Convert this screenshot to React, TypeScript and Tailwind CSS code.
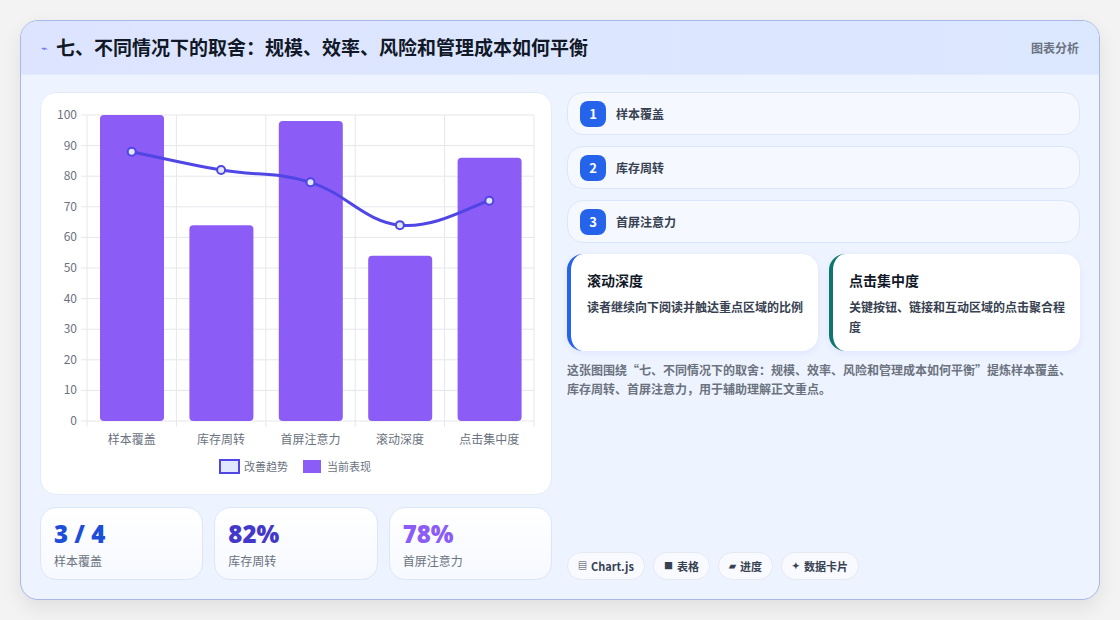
import React from "react";

const F = { fontFamily: '"Noto Sans CJK SC", "Noto Sans", sans-serif' };

function Chart() {
  const x0 = 46, x1 = 493, yT = 22, yB = 328;
  const cw = (x1 - x0) / 5;
  const y = (v: number) => yB - (v / 100) * (yB - yT);
  const bars = [100, 64, 98, 54, 86];
  const line = [88, 82, 78, 64, 72];
  const labels = ["样本覆盖", "库存周转", "首屏注意力", "滚动深度", "点击集中度"];
  const pts = line.map((v, i) => [x0 + cw * (i + 0.5), y(v)]);
  let d = `M${pts[0][0]},${pts[0][1]}`;
  for (let i = 0; i < pts.length - 1; i++) {
    const p0 = pts[i - 1] || pts[i], p1 = pts[i], p2 = pts[i + 1], p3 = pts[i + 2] || p2;
    const t = 0.2;
    const c1 = [p1[0] + (p2[0] - p0[0]) * t, p1[1] + (p2[1] - p0[1]) * t];
    const c2 = [p2[0] - (p3[0] - p1[0]) * t, p2[1] - (p3[1] - p1[1]) * t];
    d += ` C${c1[0]},${c1[1]} ${c2[0]},${c2[1]} ${p2[0]},${p2[1]}`;
  }
  return (
    <svg width="512" height="403" style={F}>
      {Array.from({ length: 11 }).map((_, i) => (
        <g key={i}>
          <line x1={x0 - 6} x2={x1} y1={y(i * 10)} y2={y(i * 10)} stroke="#e5e7eb" />
          <text x={36} y={y(i * 10) + 4} textAnchor="end" fontSize="12" fill="#6b7280">{i * 10}</text>
        </g>
      ))}
      {Array.from({ length: 6 }).map((_, i) => (
        <line key={i} x1={x0 + cw * i} x2={x0 + cw * i} y1={yT} y2={yB + 6} stroke="#e5e7eb" />
      ))}
      {bars.map((v, i) => (
        <rect key={i} x={x0 + cw * i + 13} y={y(v)} width={64} height={yB - y(v)} rx={4} fill="#8b5cf6" />
      ))}
      <path d={d} fill="none" stroke="#4f46e5" strokeWidth="3" />
      {pts.map((p, i) => (
        <circle key={i} cx={p[0]} cy={p[1]} r={4} fill="#e0e7ff" stroke="#4f46e5" strokeWidth="2" />
      ))}
      {labels.map((l, i) => (
        <text key={i} x={x0 + cw * (i + 0.5)} y={351} textAnchor="middle" fontSize="12" fill="#6b7280">{l}</text>
      ))}
      <rect x={179} y={367} width={19} height={13} fill="#e0e7ff" stroke="#4f46e5" strokeWidth="2" />
      <text x={203} y={378} fontSize="11" fill="#6b7280">改善趋势</text>
      <rect x={262} y={367} width={18} height={13} fill="#8b5cf6" />
      <text x={286} y={378} fontSize="11" fill="#6b7280">当前表现</text>
    </svg>
  );
}

function Stat({ v, l, c }: { v: string; l: string; c: string }) {
  return (
    <div className="flex-1 h-[73px] rounded-2xl border border-[#dbe6fb] bg-gradient-to-b from-white to-[#f6f9ff] px-[13px] pt-[10px]">
      <div className="text-[24px] font-black leading-[32px]" style={{ color: c, fontFamily: '"Noto Sans", sans-serif' }}>{v}</div>
      <div className="text-[12px] text-[#6b7280] mt-[3px] leading-[16px]">{l}</div>
    </div>
  );
}

function Item({ n, t }: { n: number; t: string }) {
  return (
    <div className="h-[43px] rounded-2xl border border-[#dbe6fb] bg-[#f5f8ff] flex items-center px-[12px] gap-[10px]">
      <div className="w-[26px] h-[26px] rounded-lg bg-[#2563eb] text-white text-[13px] font-bold flex items-center justify-center">{n}</div>
      <div className="text-[12px] font-bold text-[#374151]">{t}</div>
    </div>
  );
}

function Card({ t, d, c }: { t: string; d: string; c: string }) {
  return (
    <div className="flex-1 h-[97px] rounded-2xl bg-white border-l-4 shadow-[0_2px_8px_rgba(99,102,241,0.1)] pl-[16px] pr-[14px] pt-[15px]" style={{ borderLeftColor: c }}>
      <div className="text-[14px] font-bold text-[#111827] leading-[22px]">{t}</div>
      <div className="text-[12px] font-semibold text-[#374151] leading-[20px] mt-[6px]">{d}</div>
    </div>
  );
}

function Chip({ i, t }: { i: string; t: string }) {
  return (
    <div className="h-[28px] px-[10px] rounded-full border border-[#e5e9f2] bg-[#f8faff] flex items-center gap-[4px] text-[11px] font-bold text-[#374151]">
      <span className="text-[9px]">{i}</span>{t}
    </div>
  );
}

export default function App() {
  return (
    <div className="w-[1120px] h-[620px] bg-[#f3f3f4] pt-[20px] px-[20px]" style={F}>
      <div className="w-[1080px] h-[580px] rounded-[18px] border border-[#a9b8e6] bg-[#eef4ff] overflow-hidden shadow-[0_8px_20px_rgba(0,0,0,0.08)] flex flex-col">
        <div className="h-[55px] bg-gradient-to-r from-[#dde4ff] to-[#dce8ff] border-b border-[#e3eaf8] flex items-center pl-[20px] pr-[20px]">
          <span className="text-[#6366f1] text-[11px] mr-[8px]">⌁</span>
          <span className="text-[19px] font-bold text-[#111827]">七、不同情况下的取舍：规模、效率、风险和管理成本如何平衡</span>
          <span className="ml-auto text-[12px] font-semibold text-[#6b7280]">图表分析</span>
        </div>
        <div className="flex-1 flex gap-[15px] px-[19px] pt-[17px] pb-[19px]">
          <div className="w-[512px] flex flex-col gap-[12px]">
            <div className="h-[403px] rounded-2xl bg-white border border-[#e3eaf8]"><Chart /></div>
            <div className="flex gap-[11px]">
              <Stat v="3 / 4" l="样本覆盖" c="#1d4ed8" />
              <Stat v="82%" l="库存周转" c="#4338ca" />
              <Stat v="78%" l="首屏注意力" c="#8b5cf6" />
            </div>
          </div>
          <div className="flex-1 flex flex-col">
            <div className="flex flex-col gap-[11px]">
              <Item n={1} t="样本覆盖" />
              <Item n={2} t="库存周转" />
              <Item n={3} t="首屏注意力" />
            </div>
            <div className="flex gap-[11px] mt-[11px]">
              <Card t="滚动深度" d="读者继续向下阅读并触达重点区域的比例" c="#2563eb" />
              <Card t="点击集中度" d="关键按钮、链接和互动区域的点击聚合程度" c="#0f766e" />
            </div>
            <div className="mt-[9px] text-[12px] font-semibold text-[#6b7280] leading-[19px]">
              这张图围绕“七、不同情况下的取舍：规模、效率、风险和管理成本如何平衡”提炼样本覆盖、库存周转、首屏注意力，用于辅助理解正文重点。
            </div>
            <div className="mt-auto flex gap-[8px]">
              <Chip i="▤" t="Chart.js" />
              <Chip i="■" t="表格" />
              <Chip i="▰" t="进度" />
              <Chip i="✦" t="数据卡片" />
            </div>
          </div>
        </div>
      </div>
    </div>
  );
}
